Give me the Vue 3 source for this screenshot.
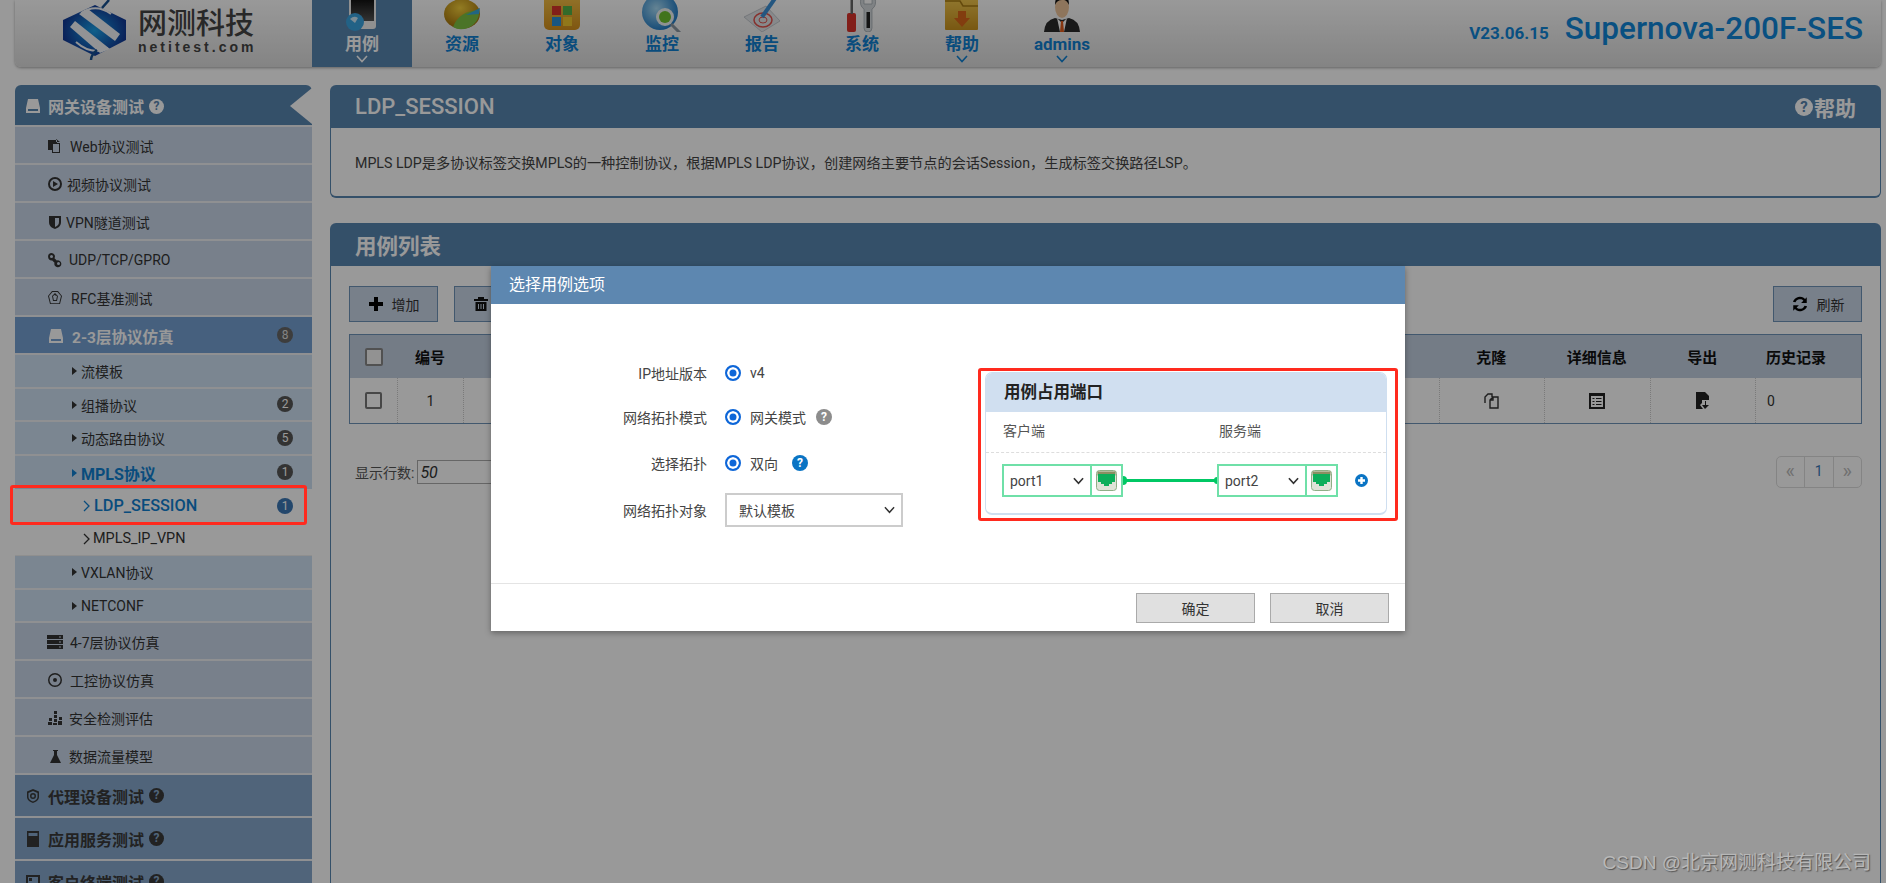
<template>
  <div class="page">
    <!-- top bar -->
    <header class="topbar">
      <div class="logo">
        <svg class="logo-mark" viewBox="0 0 66 60" width="66" height="60">
          <defs>
            <radialGradient id="logoBlue" cx="50%" cy="50%" r="50%">
              <stop offset="0%" stop-color="#1aa0e8" />
              <stop offset="100%" stop-color="#123a96" />
            </radialGradient>
          </defs>
          <path d="M33 5 L64 20 L64 40 L33 56 L1 40 L1 20 Z" fill="url(#logoBlue)" />
          <path d="M17 14 L26 9 L58 34 L53 41 Z" fill="#f4f6f8" />
          <path d="M8 27 L13 21 L48 49 L38 53 Z" fill="#f4f6f8" />
          <path d="M19 13 Q34 3 49 14" fill="none" stroke="#f4f6f8" stroke-width="2" />
          <path d="M14 42 Q30 56 46 48" fill="none" stroke="#f4f6f8" stroke-width="2" />
          <path d="M40 8 L47 0" stroke="#17508f" stroke-width="2.500" />
          <path d="M35 50 Q29 55 29 60" fill="none" stroke="#17508f" stroke-width="2.500" />
        </svg>
        <div class="logo-text">
          <div class="logo-cn">网测科技</div>
          <div class="logo-en">netitest.com</div>
        </div>
      </div>
      <nav class="tabs">
        <div v-for="tab in tabs" :key="tab.name" class="tab" :class="{ active: tab.active }">
          <svg class="tab-icon" viewBox="0 0 40 32" width="40" height="32" v-html="tab.icon"></svg>
          <span class="tab-label">{{ tab.name }}</span>
          <svg v-if="tab.menu" class="tab-caret" viewBox="0 0 12 8" width="12" height="8">
            <path d="M1 1 L6 6.5 L11 1" fill="none" stroke="currentColor" stroke-width="1.6" />
          </svg>
        </div>
      </nav>
      <div class="brand">
        <span class="version">V23.06.15</span>
        <span class="product">Supernova-200F-SES</span>
      </div>
    </header>

    <div class="main">
      <!-- left menu -->
      <aside class="sidebar">
        <template v-for="row in menu" :key="row.text">
          <div class="row" :class="row.type">
            <svg
              v-if="row.icon"
              class="row-icon"
              viewBox="0 0 16 16"
              width="16"
              height="16"
              :style="row.gap !== undefined ? { marginRight: row.gap + 'px' } : null"
            >
              <path :d="icons[row.icon]" fill="currentColor" fill-rule="evenodd" />
            </svg>
            <span v-if="row.type === 'sub' || row.type === 'sub current'" class="tri"></span>
            <svg v-if="row.type.startsWith('leaf')" class="leaf-arrow" viewBox="0 0 7 12" width="7" height="12">
              <path d="M1 1 L6 6 L1 11" fill="none" stroke="currentColor" stroke-width="1.3" />
            </svg>
            <span class="row-text">{{ row.text }}</span>
            <span v-if="row.help" class="help-dot">?</span>
            <span v-if="row.badge" class="badge">{{ row.badge }}</span>
            <span v-if="row.notch" class="notch"></span>
            <span v-if="row.marked" class="mark side-mark"></span>
          </div>
        </template>
      </aside>

      <div class="content">
        <section class="panel intro">
          <div class="panel-head">
            <span class="panel-title latin">LDP_SESSION</span>
            <span class="panel-help"><i class="help-big">?</i>帮助</span>
          </div>
          <div class="intro-body">
            MPLS LDP是多协议标签交换MPLS的一种控制协议，根据MPLS LDP协议，创建网络主要节点的会话Session，生成标签交换路径LSP。
          </div>
        </section>

        <section class="panel list">
          <div class="panel-head">
            <span class="panel-title">用例列表</span>
          </div>
          <div class="list-body">
            <div class="toolbar">
              <button class="tool-btn">
                <svg viewBox="0 0 16 16" width="16" height="16"><path d="M6 1h4v5h5v4h-5v5H6v-5H1V6h5z" fill="#000" /></svg>
                增加
              </button>
              <button class="tool-btn">
                <svg viewBox="0 0 16 16" width="16" height="16"><path d="M5 1h6v2h4v2H1V3h4zM2.500 6h11v9h-11zM5 8v5h1V8zM7.500 8v5h1V8zM10 8v5h1V8z" fill="#111" fill-rule="evenodd" /></svg>
                删除
              </button>
              <span class="spacer"></span>
              <button class="tool-btn">
                <svg viewBox="0 0 16 16" width="18" height="18"><path d="M14 2v5H9l2-2a4.200 4.200 0 0 0-7 1.500L1.700 6A6.500 6.500 0 0 1 12.500 3.500zM2 14V9h5l-2 2a4.200 4.200 0 0 0 7-1.500l2.300.5A6.500 6.500 0 0 1 3.500 12.500z" fill="#000" /></svg>
                刷新
              </button>
            </div>

            <div class="table">
              <div class="tr th">
                <div class="td c-check"><span class="check"></span></div>
                <div class="td c-no">编号</div>
                <div class="td c-fill"></div>
                <div class="td c-act">克隆</div>
                <div class="td c-act">详细信息</div>
                <div class="td c-act">导出</div>
                <div class="td c-last">历史记录</div>
              </div>
              <div class="tr tb">
                <div class="td c-check"><span class="check big"></span></div>
                <div class="td c-no">1</div>
                <div class="td c-fill"></div>
                <div class="td c-act">
                  <svg viewBox="0 0 18 18" width="18" height="18"><path d="M2 11V5l3-3h4v3M7 8l3-3h5v11H7z M10 5v3H7" fill="none" stroke="#333" stroke-width="1.400" /></svg>
                </div>
                <div class="td c-act">
                  <svg viewBox="0 0 16 16" width="16" height="16"><path d="M0 0h16v16H0zM2 3v11h12V3zM3.500 5h2v1h-2zM7 5h5.500v1H7zM3.500 8h2v1h-2zM7 8h5.500v1H7zM3.500 11h2v1h-2zM7 11h5.500v1H7z" fill="#222" fill-rule="evenodd" /></svg>
                </div>
                <div class="td c-act">
                  <svg viewBox="0 0 14 17" width="14" height="17"><path d="M0 0h9l4 4v4H6v3l-2 2 3 4H0zM10 9v4h3l-4 4-3-4h3V9z" fill="#222" /></svg>
                </div>
                <div class="td c-last zero">0</div>
              </div>
            </div>

            <div class="pager-row">
              <label class="rows-label">显示行数:</label>
              <div class="rows-select">
                <em>50</em>
                <svg viewBox="0 0 12 8" width="11" height="8"><path d="M1 1 L6 6.500 L11 1" fill="none" stroke="#222" stroke-width="1.600" /></svg>
              </div>
              <span class="spacer"></span>
              <div class="pager">
                <span class="pg dim">«</span>
                <span class="pg num">1</span>
                <span class="pg dim">»</span>
              </div>
            </div>
          </div>
        </section>
      </div>
    </div>

    <!-- dim layer + dialog -->
    <div class="overlay">
      <div class="dialog">
        <div class="dialog-head">选择用例选项</div>
        <div class="dialog-body">
          <form class="form" @submit.prevent>
            <div class="f-row">
              <label>IP地址版本</label>
              <span class="radio"></span><span class="f-val">v4</span>
            </div>
            <div class="f-row">
              <label>网络拓扑模式</label>
              <span class="radio"></span><span class="f-val">网关模式</span>
              <span class="q gray">?</span>
            </div>
            <div class="f-row">
              <label>选择拓扑</label>
              <span class="radio"></span><span class="f-val">双向</span>
              <span class="q blue">?</span>
            </div>
            <div class="f-row">
              <label>网络拓扑对象</label>
              <div class="tpl-select">
                默认模板
                <svg viewBox="0 0 12 8" width="11" height="8"><path d="M1 1 L6 6.500 L11 1" fill="none" stroke="#333" stroke-width="1.600" /></svg>
              </div>
            </div>
          </form>

          <div class="ports-mark">
            <div class="ports-card">
              <div class="ports-head">用例占用端口</div>
              <div class="ports-labels">
                <span>客户端</span>
                <span>服务端</span>
              </div>
              <div class="ports-row">
                <template v-for="(p, i) in ['port1', 'port2']" :key="p">
                  <div class="port">
                    <div class="port-select">
                      {{ p }}
                      <svg viewBox="0 0 12 8" width="11" height="8"><path d="M1 1 L6 6.500 L11 1" fill="none" stroke="#333" stroke-width="1.800" /></svg>
                    </div>
                    <div class="port-icon">
                      <svg viewBox="0 0 21 21" width="21" height="21">
                        <rect x="0.500" y="0.500" width="20" height="20" rx="3" fill="#dfe3d8" stroke="#8fae86" />
                        <rect x="1.500" y="1.500" width="18" height="4" fill="#8a8f62" />
                        <path d="M2 4h17v8h-3v2h-3v2H8v-2H5v-2H2z" fill="#0dae5a" />
                      </svg>
                    </div>
                  </div>
                  <div v-if="i === 0" class="link"></div>
                </template>
                <span class="plus">
                  <svg viewBox="0 0 13 13" width="13" height="13">
                    <circle cx="6.500" cy="6.500" r="6.500" fill="#0a74c4" />
                    <path d="M5.300 3h2.400v2.300H10v2.400H7.700V10H5.300V7.700H3V5.300h2.300z" fill="#fff" />
                  </svg>
                </span>
              </div>
            </div>
          </div>
        </div>
        <div class="dialog-foot">
          <button class="foot-btn">确定</button>
          <button class="foot-btn">取消</button>
        </div>
      </div>
    </div>

    <div class="watermark">CSDN @北京网测科技有限公司</div>
  </div>
</template>

<script setup>
const tabs = [
  {
    name: '用例', active: true, menu: true,
    icon: '<defs><linearGradient id="phoneScreen" x1="0" y1="0" x2="0" y2="1"><stop offset="0" stop-color="#000"/><stop offset="1" stop-color="#555"/></linearGradient></defs><rect x="7" y="-8" width="27" height="37" rx="3" fill="#f0f0f0"/><rect x="9" y="-6" width="23" height="27" fill="url(#phoneScreen)"/><circle cx="13" cy="22" r="9" fill="#3aa3e0"/><path d="M8 19 Q12 15 16 18 L13 23 Z" fill="#cfeaf8"/>'
  },
  {
    name: '资源',
    icon: '<defs><radialGradient id="orb" cx="45%" cy="30%" r="70%"><stop offset="0" stop-color="#f4cf3a"/><stop offset="1" stop-color="#a06e0a"/></radialGradient></defs><ellipse cx="20" cy="14" rx="18" ry="15" fill="url(#orb)"/><path d="M11 27 Q17 11 37 10 Q38 22 26 28 Q17 31 11 27Z" fill="#7dc242"/><path d="M24 15 L38 8 L37 14Z" fill="#37a9d9"/>'
  },
  {
    name: '对象',
    icon: '<defs><linearGradient id="box" x1="0" y1="0" x2="0" y2="1"><stop offset="0" stop-color="#f6c44a"/><stop offset="1" stop-color="#d4901c"/></linearGradient></defs><rect x="2" y="-6" width="36" height="36" rx="5" fill="url(#box)"/><rect x="10" y="6" width="9" height="9" fill="#d8342a"/><rect x="21" y="6" width="9" height="9" fill="#55b146"/><rect x="10" y="17" width="9" height="9" fill="#2a8fd8"/><rect x="21" y="17" width="9" height="9" fill="#f1c62c"/>'
  },
  {
    name: '监控',
    icon: '<defs><radialGradient id="globe" cx="40%" cy="40%" r="65%"><stop offset="0" stop-color="#a8dcf6"/><stop offset="1" stop-color="#1d78c4"/></radialGradient></defs><circle cx="18" cy="12" r="18" fill="url(#globe)"/><circle cx="23" cy="17" r="9" fill="#eef4f4"/><circle cx="23" cy="17" r="6" fill="#6fc12f"/><path d="M29 24 L38 33" stroke="#8a96a0" stroke-width="3"/>'
  },
  {
    name: '报告',
    icon: '<path d="M2 17 L24 6 L38 21 L20 32Z" fill="#e2e5e8" stroke="#b8bec4" stroke-width="0.800"/><ellipse cx="21" cy="20" rx="9" ry="7" fill="none" stroke="#e0524d" stroke-width="1.500"/><ellipse cx="21" cy="20" rx="4" ry="3" fill="none" stroke="#e0524d"/><path d="M20 17 L34 -3" stroke="#3b8fd6" stroke-width="4"/>'
  },
  {
    name: '系统',
    icon: '<rect x="5" y="13" width="9" height="19" rx="2" fill="#d9322b"/><rect x="8.500" y="-2" width="2.500" height="16" fill="#666"/><path d="M19 -2 Q17 6 22 9 V28 Q22 32 26 32 Q30 32 30 28 V9 Q35 6 33 -2 L30 -2 V4 H22 V-2Z" fill="#d4d9dd" stroke="#8f979e" stroke-width="0.600"/><rect x="24.500" y="12" width="3.500" height="16" fill="#222"/>'
  },
  {
    name: '帮助', menu: true,
    icon: '<defs><linearGradient id="folder" x1="0" y1="0" x2="0" y2="1"><stop offset="0" stop-color="#f2c84e"/><stop offset="1" stop-color="#c9921e"/></linearGradient></defs><rect x="3" y="-2" width="33" height="32" rx="1" fill="url(#folder)"/><path d="M3 1 H18 L21 6 H36" fill="none" stroke="#a77b14" stroke-width="1.500"/><path d="M16 11 H24 V18 H28 L20 27 L12 18 H16Z" fill="#d9661a"/>'
  },
  {
    name: 'admins', menu: true,
    icon: '<path d="M2 32 Q3 20 13 18 L20 20 L27 18 Q37 20 38 32Z" fill="#2a2a2a"/><path d="M15 18 L20 23 L25 18 L22 32 H18Z" fill="#fff"/><path d="M19 21 H21 L22 32 H18Z" fill="#e05a1c"/><ellipse cx="20" cy="7" rx="7" ry="11" fill="#edc39a"/><path d="M13 5 Q13 -5 20 -5 Q27 -5 27 5 Q24 -1 20 0 Q15 0 13 5Z" fill="#111"/>'
  }
]

const icons = {
  drive: 'M3 1h10l2 9v5H1v-5zM3 11v2h10v-2z',
  doc: 'M1 2h7l2 0v3h3v10H5v-3H1zM9 1l4 3H9zM6 6v8h6V6z',
  play: 'M8 1a7 7 0 1 1 0 14A7 7 0 0 1 8 1zm0 2a5 5 0 1 0 0 10A5 5 0 0 0 8 3zM6 5l5 3-5 3z',
  shield: 'M2 2h12v6c0 4-3 6-6 7-3-1-6-3-6-7zM8 4v9c2-1 4-2 4-5V4z',
  link: 'M4.500 1a3.500 3.500 0 0 1 3 5.200l2.300 2.300A3.500 3.500 0 1 1 7.500 10.800L5.200 8.500A3.500 3.500 0 1 1 4.500 1zm0 2a1.500 1.500 0 1 0 0 3 1.500 1.500 0 0 0 0-3zm7 7a1.500 1.500 0 1 0 0 3 1.500 1.500 0 0 0 0-3z',
  globe: 'M5 1h6l4 5-2 8H3L1 6zM5.500 2 2 6l1.800 7.200h8.400L14 6l-3.500-4zM8 3l3 3-1 5H6L5 6zM7 5v.5L6 6l.8 4h2.400L10 6z',
  server: 'M0 1h16v4H0zM0 6h16v4H0zM0 11h16v4H0zM12 2.500v1h2v-1zM12 7.500v1h2v-1zM12 12.500v1h2v-1z',
  target: 'M8 1a7 7 0 1 1 0 14A7 7 0 0 1 8 1zm0 1.500a5.500 5.500 0 1 0 0 11 5.500 5.500 0 0 0 0-11zM8 6a2 2 0 1 1 0 4 2 2 0 0 1 0-4z',
  bars: 'M7 1h3v3H7zM7 5h3v3H7zM2 8h3v3H2zM7 9h3v3H7zM12 7h3v3h-3zM1 12h4v3H1zM6 13h4v2H6zM11 11h4v4h-4z',
  flask: 'M6 2h5v1h-1v4l4 8H3l4-8V3H6z',
  badge: 'M8 1l6 2.500V9c0 3-3 5-6 6-3-1-6-3-6-6V3.500zM8 3 3.500 5v4c0 2 2 3.500 4.500 4.500 2.500-1 4.500-2.500 4.500-4.500V5zM8 5a3 3 0 1 1 0 6 3 3 0 0 1 0-6zm0 1.500a1.500 1.500 0 1 0 0 3 1.500 1.500 0 0 0 0-3z',
  calc: 'M2 0h12v16H2zM3.500 2v3h9V2z',
  screen: 'M1 1h14v14H1zM3 3v10h10V3zM4 4h3v3H4z'
}

const menu = [
  { type: 'head first', text: '网关设备测试', icon: 'drive', help: true, notch: true },
  { type: 'item', text: 'Web协议测试', icon: 'doc', gap: 7 },
  { type: 'item', text: '视频协议测试', icon: 'play', gap: 4 },
  { type: 'item', text: 'VPN隧道测试', icon: 'shield', gap: 3 },
  { type: 'item', text: 'UDP/TCP/GPRO', icon: 'link', gap: 6 },
  { type: 'item', text: 'RFC基准测试', icon: 'globe', gap: 8 },
  { type: 'group', text: '2-3层协议仿真', icon: 'drive', badge: 8 },
  { type: 'sub', text: '流模板' },
  { type: 'sub', text: '组播协议', badge: 2 },
  { type: 'sub', text: '动态路由协议', badge: 5 },
  { type: 'sub current', text: 'MPLS协议', badge: 1 },
  { type: 'leaf active', text: 'LDP_SESSION', badge: 1, marked: true },
  { type: 'leaf', text: 'MPLS_IP_VPN' },
  { type: 'sub', text: 'VXLAN协议' },
  { type: 'sub', text: 'NETCONF' },
  { type: 'item', text: '4-7层协议仿真', icon: 'server', gap: 7 },
  { type: 'item', text: '工控协议仿真', icon: 'target', gap: 7 },
  { type: 'item', text: '安全检测评估', icon: 'bars', gap: 6 },
  { type: 'item', text: '数据流量模型', icon: 'flask', gap: 6 },
  { type: 'head', text: '代理设备测试', icon: 'badge', help: true },
  { type: 'head', text: '应用服务测试', icon: 'calc', help: true },
  { type: 'head', text: '客户终端测试', icon: 'screen', help: true }
]
</script>

<style>
html,
body {
  margin: 0;
  background: #fff;
  overflow: hidden;
}
</style>

<style scoped>
.page {
  position: relative;
  height: 883px;
  overflow: hidden;
  font-family: Roboto, "Noto Sans CJK SC", sans-serif;
  font-size: 14px;
  color: #333;
  background: #fff;
}

/* top bar */
.topbar {
  display: flex;
  align-items: stretch;
  height: 67px;
  margin: 0 5px 0 15px;
  background: linear-gradient(#ffffff, #dcdcdc);
  border-radius: 0 0 6px 6px;
  box-shadow: 0 1px 3px rgba(0, 0, 0, 0.35);
}

.logo {
  display: flex;
  width: 297px;
  box-sizing: border-box;
  padding-left: 47px;
  gap: 10px;
}

.logo-mark {
  flex: none;
}

.logo-text {
  padding-top: 9px;
  color: #444;
}

.logo-cn {
  font-size: 29px;
  line-height: 31px;
  font-weight: 500;
}

.logo-en {
  font-family: "Liberation Sans", sans-serif;
  font-size: 14px;
  line-height: 14px;
  font-weight: 700;
  letter-spacing: 3px;
}

.tabs {
  display: flex;
}

.tab {
  position: relative;
  width: 100px;
  height: 67px;
  color: #0f7fd0;
  text-align: center;
}

.tab.active {
  background: #5885af;
  color: #fff;
}

.tab-icon {
  display: block;
  margin: 0 auto;
  overflow: hidden;
}

.tab-label {
  position: absolute;
  top: 32px;
  left: 0;
  right: 0;
  font-size: 17px;
  line-height: 24px;
  font-weight: 700;
}

.tab-caret {
  position: absolute;
  top: 55px;
  left: 44px;
}

.brand {
  margin-left: auto;
  display: flex;
  align-items: baseline;
  padding: 10px 18px 0 0;
  gap: 16px;
  color: #1085d8;
}

.version {
  font-size: 17px;
  font-weight: 700;
}

.product {
  font-size: 31.500px;
  font-weight: 500;
}

/* layout */
.main {
  display: flex;
  margin: 18px 5px 0 15px;
  gap: 18px;
}

/* sidebar */
.sidebar {
  flex: none;
  width: 297px;
}

.row {
  position: relative;
  display: flex;
  align-items: center;
  box-sizing: border-box;
  border-bottom: 2px solid #eef0f3;
  color: #333;
}

.row.head {
  height: 43px;
  padding-left: 10px;
  background: #85a7cb;
  color: #3a3a3a;
  font-size: 16px;
  font-weight: 700;
}

.row.head.first {
  height: 42px;
  padding-top: 2px;
  background: #5885af;
  color: #fff;
  border-radius: 6px 6px 0 0;
}

.row.head .row-icon {
  margin-right: 7px;
}

.row.item {
  height: 38px;
  padding: 1px 0 0 32px;
  background: #c9d6e8;
}

.row.group {
  height: 38px;
  padding: 2px 0 0 33px;
  background: #76a0d2;
  color: #fff;
  font-size: 15.500px;
  font-weight: 700;
}

.row.group .row-icon {
  margin-right: 8px;
}

.row.sub {
  height: 33.500px;
  padding: 1px 0 0 57px;
  background: #cde0f2;
}

.tri {
  width: 0;
  height: 0;
  margin-right: 4px;
  border-left: 5px solid currentColor;
  border-top: 4px solid transparent;
  border-bottom: 4px solid transparent;
}

.row.sub.current {
  color: #0f7fd0;
  font-size: 16px;
  font-weight: 700;
  border-bottom: 0;
}

.row.leaf {
  height: 34px;
  padding-left: 68px;
  background: #fff;
  border-bottom: 0;
}

.row.leaf.active {
  height: 33px;
  color: #0f7fd0;
  font-size: 16.300px;
  font-weight: 500;
  background: #fff;
}

.leaf-arrow {
  margin-right: 4px;
}

.row.leaf:not(.active) {
  font-size: 14.400px;
  border-bottom: 1px solid #eee;
}

.row.leaf:not(.active) .leaf-arrow {
  margin-right: 3px;
}

.badge {
  position: absolute;
  right: 19px;
  top: 50%;
  width: 16px;
  height: 16px;
  margin-top: -8px;
  border-radius: 50%;
  background: #555;
  color: #fff;
  font-size: 12px;
  font-weight: 400;
  line-height: 16px;
  text-align: center;
}

.group .badge {
  background: #666;
  color: #ddd;
}

.leaf .badge {
  background: #3b77b5;
}

.help-dot {
  width: 15px;
  height: 15px;
  margin-left: 5px;
  border-radius: 50%;
  background: currentColor;
  font-size: 12px;
  line-height: 15px;
  text-align: center;
}

.head .help-dot {
  color: #3a3a3a;
}

.head.first .help-dot {
  color: #fff;
}

.help-dot::first-line {
  color: #85a7cb;
}

.first .help-dot::first-line {
  color: #5885af;
}

.notch {
  position: absolute;
  right: 0;
  top: 3px;
  width: 0;
  height: 0;
  border-right: 22px solid #fff;
  border-top: 18px solid transparent;
  border-bottom: 18px solid transparent;
}

/* drawn on top of the dim layer */
.side-mark {
  position: absolute;
  left: -5px;
  right: 5px;
  top: -4px;
  bottom: -3px;
  border: 3px solid #ff2a1e;
  border-radius: 3px;
  z-index: 30;
  pointer-events: none;
}

/* panels */
.content {
  flex: 1;
  min-width: 0;
}

.panel-head {
  display: flex;
  align-items: center;
  justify-content: space-between;
  height: 43px;
  padding: 0 25px;
  background: #5885af;
  border-radius: 6px 6px 0 0;
  color: #fff;
}

.panel-title {
  font-size: 21.500px;
  font-weight: 700;
}

.panel-title.latin {
  font-size: 22px;
  font-weight: 500;
}

.panel-help {
  display: flex;
  align-items: center;
  font-size: 21px;
  font-weight: 700;
}

.help-big {
  width: 18px;
  height: 18px;
  margin-right: 1px;
  border-radius: 50%;
  background: #fff;
  color: #5885af;
  font-size: 15px;
  font-style: normal;
  line-height: 18px;
  text-align: center;
}

.intro-body {
  height: 68px;
  padding-left: 24px;
  border: 1px solid #5885af;
  border-top: 0;
  border-bottom-width: 2px;
  border-radius: 0 0 6px 6px;
  font-size: 14.200px;
  line-height: 70px;
  color: #444;
}

.list {
  margin-top: 25px;
}

.list-body {
  height: 620px;
  padding: 20px 18px 0;
  border: 1px solid #5885af;
  border-top: 0;
}

.toolbar {
  display: flex;
  gap: 16px;
}

.spacer {
  flex: 1;
}

.tool-btn {
  display: flex;
  align-items: center;
  justify-content: center;
  gap: 8px;
  width: 89px;
  height: 36px;
  padding: 0;
  border: 1px solid #6f93b8;
  background: #c8d5e6;
  color: #333;
  font: 14px Roboto, "Noto Sans CJK SC", sans-serif;
}

.table {
  margin-top: 12px;
  border: 1px solid #6f93b8;
  border-top-width: 1px;
}

.tr {
  display: flex;
}

.th {
  height: 43px;
  background: #c2cfe0;
  color: #111;
  font-size: 15px;
  font-weight: 700;
}

.tb {
  height: 45px;
  background: #fff;
}

.td {
  display: flex;
  align-items: center;
  justify-content: center;
  box-sizing: border-box;
}

.tb .td + .td {
  border-left: 1px dotted #ccc;
}

.c-check {
  width: 47px;
}

.c-no {
  width: 66px;
}

.c-fill {
  flex: 1;
}

.c-act {
  width: 105.500px;
}

.c-last {
  width: 106px;
  justify-content: flex-start;
  padding-left: 11px;
}

.check {
  width: 14px;
  height: 14px;
  border: 2px solid #888;
  border-radius: 2px;
  background: #f4f4f4;
}

.check.big {
  width: 13px;
  height: 13px;
  border-color: #777;
  background: #fff;
}

.pager-row {
  display: flex;
  align-items: center;
  margin-top: 32px;
  padding-left: 6px;
}

.rows-label {
  color: #555;
}

.rows-select {
  display: flex;
  align-items: center;
  justify-content: space-between;
  width: 120px;
  height: 24px;
  margin-left: 3px;
  padding: 0 8px 0 2px;
  box-sizing: border-box;
  border: 1px solid #aaa;
  font-size: 16px;
}

.pager {
  display: flex;
  height: 30px;
  border: 1px solid #ddd;
  border-radius: 5px;
}

.pg {
  width: 27.500px;
  line-height: 29px;
  text-align: center;
}

.pg.num {
  border-left: 1px solid #ddd;
  border-right: 1px solid #ddd;
  color: #3b77b5;
}

.pg.dim {
  color: #bbb;
  font-size: 20px;
}

/* dim layer and dialog */
.overlay {
  position: absolute;
  inset: 0;
  z-index: 10;
  background: rgba(0, 0, 0, 0.4);
}

.dialog {
  position: absolute;
  left: 491px;
  top: 266px;
  width: 914px;
  height: 365px;
  display: flex;
  flex-direction: column;
  background: #fff;
  box-shadow: 0 2px 6px rgba(0, 0, 0, 0.35);
}

.dialog-head {
  height: 38px;
  padding-left: 18px;
  background: #5d87b0;
  color: #fff;
  font-size: 16px;
  line-height: 38px;
}

.dialog-body {
  flex: 1;
  display: flex;
  align-items: flex-start;
}

.form {
  width: 487px;
  padding-top: 52px;
  color: #444;
}

.f-row {
  display: flex;
  align-items: center;
  height: 34px;
}

.f-row:nth-child(1) {
  margin-bottom: 10px;
}

.f-row:nth-child(2) {
  margin-bottom: 12px;
}

.f-row:nth-child(3) {
  margin-bottom: 13px;
}

.f-row label {
  width: 216px;
  margin-right: 18px;
  text-align: right;
}

.radio {
  width: 12px;
  height: 12px;
  border: 2px solid #0d66d8;
  border-radius: 50%;
  background: #0d66d8;
  box-shadow: inset 0 0 0 2.500px #fff;
}

.f-val {
  margin-left: 9px;
}

.q {
  width: 16px;
  height: 16px;
  margin-left: 10px;
  border-radius: 50%;
  color: #fff;
  font-size: 12px;
  font-weight: 700;
  line-height: 16px;
  text-align: center;
}

.q.gray {
  background: #8c8c8c;
}

.q.blue {
  margin-left: 14px;
  background: #0a74c4;
}

.tpl-select {
  display: flex;
  align-items: center;
  justify-content: space-between;
  width: 178px;
  height: 34px;
  box-sizing: border-box;
  padding: 0 6px 0 12px;
  border: 2px solid #ccc;
  color: #444;
}

.ports-mark {
  position: relative;
  z-index: 30;
  height: 146px;
  width: 410px;
  margin-top: 64px;
  padding: 1px 0 0 4px;
  border: 3px solid #ff2a1e;
  border-radius: 3px;
  background: #fff;
}

.ports-card {
  width: 402px;
  height: 143px;
  box-sizing: border-box;
  border: 1px solid #cfdff0;
  border-bottom-width: 2px;
  border-radius: 7px;
  overflow: hidden;
}

.ports-head {
  height: 39px;
  padding-left: 18px;
  background: #d0dff0;
  color: #222;
  font-size: 16.500px;
  font-weight: 700;
  line-height: 40px;
}

.ports-labels {
  display: flex;
  height: 40px;
  padding-left: 17px;
  border-bottom: 1px dashed #ddd;
  color: #555;
  line-height: 39px;
}

.ports-labels span {
  flex: none;
  width: 216px;
}

.ports-row {
  display: flex;
  align-items: center;
  padding: 11px 0 0 16px;
}

.port {
  display: flex;
  height: 33px;
  box-sizing: border-box;
  border: 2px solid #6fe0a8;
}

.port-select {
  display: flex;
  align-items: center;
  justify-content: space-between;
  width: 88px;
  box-sizing: border-box;
  padding: 0 6px 0 6px;
  border-right: 2px solid #6fe0a8;
  color: #444;
}

.port-icon {
  display: flex;
  align-items: center;
  justify-content: center;
  width: 29px;
}

.link {
  position: relative;
  width: 94px;
  height: 3px;
  background: #00c864;
}

.link::before,
.link::after {
  content: "";
  position: absolute;
  top: -3px;
  width: 4px;
  height: 9px;
  background: #00c864;
}

.link::before {
  left: 0;
  border-radius: 0 4px 4px 0;
}

.link::after {
  right: 0;
  top: -2px;
  width: 3px;
  height: 7px;
  border-radius: 4px 0 0 4px;
}

.plus {
  display: flex;
  margin-left: 17px;
}

.dialog-foot {
  display: flex;
  justify-content: flex-end;
  gap: 15px;
  height: 48px;
  box-sizing: border-box;
  padding: 9px 16px 0 0;
  border-top: 1px solid #e4e4e4;
}

.foot-btn {
  width: 119px;
  height: 30px;
  border: 1px solid #aaa;
  background: #e0e0e0;
  color: #333;
  font: 14px Roboto, "Noto Sans CJK SC", sans-serif;
}

.watermark {
  position: absolute;
  right: 15px;
  bottom: 8px;
  z-index: 20;
  color: #b8b8b8;
  font-family: "Liberation Sans", "Noto Sans CJK SC", sans-serif;
  font-size: 19px;
  line-height: 24px;
  text-shadow: 1px 1px 1px #555;
}
</style>
